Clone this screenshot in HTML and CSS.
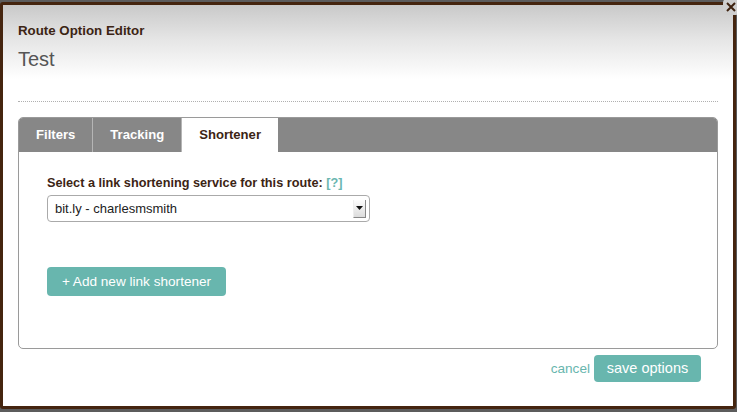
FILE: index.html
```html
<!DOCTYPE html>
<html>
<head>
<meta charset="utf-8">
<link rel="stylesheet" href="styles.css">
</head>
<body>
<div class="dialog">
  <div class="header">
    <div class="title">Route Option Editor</div>
    <div class="subtitle">Test</div>
  </div>
  <div class="divider"></div>
  <div class="tabs">
    <div class="tabbar">
      <div class="tab">Filters</div>
      <div class="tab">Tracking</div>
      <div class="tab active">Shortener</div>
    </div>
    <div class="panel">
      <div class="label">Select a link shortening service for this route: <span class="help">[?]</span></div>
      <div class="select">
        <span>bit.ly - charlesmsmith</span>
        <span class="arrow"><svg width="7" height="4" viewBox="0 0 7 4"><path d="M0 0h7L3.5 4z" fill="#111"/></svg></span>
      </div>
      <div class="addbtn">+ Add new link shortener</div>
    </div>
  </div>
  <div class="footer">
    <span class="cancel">cancel</span>
    <span class="save">save options</span>
  </div>
  <div class="close"><svg width="12" height="12" viewBox="0 0 12 12"><path d="M2 2L10 10M10 2L2 10" stroke="#3e2210" stroke-width="2"/></svg></div>
</div>
</body>
</html>
```
FILE: styles.css
```css
html, body {
  margin: 0;
  padding: 0;
}
body {
  background: #5c5c5c;
  width: 737px;
  height: 412px;
  overflow: hidden;
  padding-top: 2px;
  box-sizing: border-box;
  font-family: "Liberation Sans", Arial, sans-serif;
}
.dialog {
  position: relative;
  width: 736px;
  height: 407px;
  box-sizing: border-box;
  border: 3px solid #45250f;
  border-radius: 3px;
  background: #fff;
}
.header {
  background: linear-gradient(#c9c9c9, #e6e6e6 45%, #ffffff 95%);
  padding: 18px 15px 0 15px;
  height: 78px;
  box-sizing: border-box;
}
.title {
  font-size: 13.3px;
  font-weight: bold;
  color: #3c2414;
  line-height: 16px;
}
.subtitle {
  margin-top: 8px;
  font-size: 20px;
  color: #555;
  line-height: 24px;
}
.divider {
  margin: 18px 15px 0 15px;
  border-top: 1px dotted #b0b0b0;
  height: 0;
}
.tabs {
  margin: 15px 15px 0 15px;
  border: 1px solid #9a9a9a;
  border-radius: 5px;
  height: 232px;
  box-sizing: border-box;
  overflow: hidden;
}
.tabbar {
  display: flex;
  background: #878787;
  height: 34px;
}
.tab {
  padding: 0 17px;
  line-height: 34px;
  font-size: 13.1px;
  font-weight: bold;
  color: #fff;
  border-right: 1px solid #b5b5b5;
}
.tab.active {
  background: #fff;
  color: #3c2414;
  border-right: none;
}
.panel {
  padding: 23px 28px 0 28px;
}
.label {
  font-size: 12.7px;
  font-weight: bold;
  color: #3c2414;
  line-height: 16px;
}
.help {
  color: #6ab6b0;
}
.select {
  margin-top: 4px;
  width: 323px;
  height: 27px;
  box-sizing: border-box;
  border: 1px solid #aaa;
  border-radius: 4px;
  display: flex;
  align-items: center;
  justify-content: space-between;
  padding: 0 3px 0 7px;
  font-size: 13px;
  color: #222;
}
.arrow {
  width: 13px;
  height: 18px;
  box-sizing: border-box;
  background: linear-gradient(#fdfdfd, #dcdcdc);
  border-right: 1px solid #888;
  border-bottom: 1px solid #888;
  border-left: 1px solid #eee;
  display: flex;
  align-items: center;
  justify-content: center;
}
.addbtn {
  margin-top: 45px;
  width: 179px;
  height: 29px;
  line-height: 29px;
  background: #68b6ae;
  border-radius: 4px;
  color: #fff;
  font-size: 13.6px;
  text-align: center;
}
.footer {
  display: flex;
  justify-content: flex-end;
  align-items: center;
  gap: 4px;
  padding: 6px 32px 0 0;
}
.cancel {
  color: #68b6ae;
  font-size: 13.6px;
}
.save {
  display: inline-block;
  width: 107px;
  height: 27px;
  line-height: 27px;
  text-align: center;
  background: #68b6ae;
  color: #fff;
  font-size: 14.5px;
  border-radius: 4px;
}
.close {
  position: absolute;
  top: -6px;
  right: -6px;
  width: 16px;
  height: 16px;
  background: #cfcfcf;
  border-radius: 4px;
  display: flex;
  align-items: center;
  justify-content: center;
}
```
